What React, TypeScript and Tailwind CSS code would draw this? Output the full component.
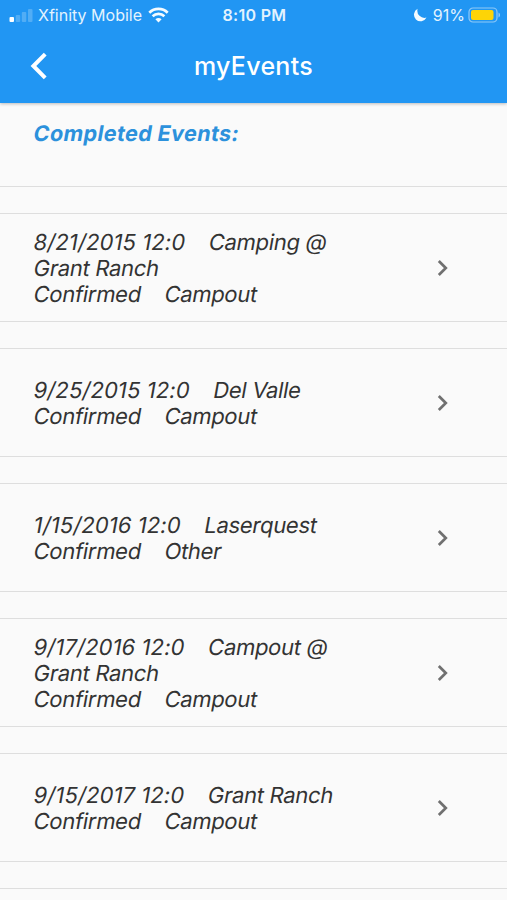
const events = [
  { date: '8/21/2015 12:0', title: ['Camping @', 'Grant Ranch'], status: 'Confirmed', type: 'Campout' },
  { date: '9/25/2015 12:0', title: ['Del Valle'], status: 'Confirmed', type: 'Campout' },
  { date: '1/15/2016 12:0', title: ['Laserquest'], status: 'Confirmed', type: 'Other' },
  { date: '9/17/2016 12:0', title: ['Campout @', 'Grant Ranch'], status: 'Confirmed', type: 'Campout' },
  { date: '9/15/2017 12:0', title: ['Grant Ranch'], status: 'Confirmed', type: 'Campout' },
]

function StatusBar() {
  return (
    <div className="grid h-[30px] grid-cols-3 items-center pl-[9px] pr-[7px] text-[16px] text-[#e3f3fe]">
      <div className="flex items-center whitespace-nowrap">
        <svg width="24" height="15" viewBox="0 0 24 15" className="shrink-0">
          <rect x="0.5" y="9" width="4.5" height="5" rx="1" fill="#fff" />
          <rect x="6.7" y="7" width="4.5" height="7" rx="1" fill="#fff" opacity="0.22" />
          <rect x="12.8" y="4" width="4.5" height="10" rx="1" fill="#fff" opacity="0.22" />
          <rect x="19" y="1" width="4.5" height="13" rx="1" fill="#fff" opacity="0.22" />
        </svg>
        <span className="ml-[5px]">Xfinity Mobile</span>
        <svg width="21" height="16" viewBox="0 0 21 16" className="ml-[6px] shrink-0" fill="none" stroke="#f4fbff" strokeWidth="2.7">
          <path d="M1.3 5.7a13.2 13.2 0 0 1 18.4 0" />
          <path d="M4.6 9.3a8.6 8.6 0 0 1 11.8 0" />
          <path d="M10.5 15.6l-3.1-3.3a4.6 4.6 0 0 1 6.2 0z" fill="#f4fbff" stroke="none" />
        </svg>
      </div>
      <p className="text-center font-semibold tracking-[0.3px]">8:10 PM</p>
      <div className="flex items-center justify-end">
        <svg width="14" height="14" viewBox="0 0 14 14" fill="#f4fbff">
          <path d="M4.6 0.8a7.2 7.2 0 0 0 8.9 8.8A6.6 6.6 0 1 1 4.6 0.8z" />
        </svg>
        <span className="ml-[6px]">91%</span>
        <svg width="32" height="16" viewBox="0 0 32 16" className="ml-[3px] shrink-0">
          <rect x="1" y="1" width="28" height="14" rx="4" fill="none" stroke="#8fc9f8" strokeWidth="1.2" />
          <rect x="3" y="3" width="22.5" height="10" rx="2" fill="#fdd406" />
          <path d="M30.5 5.5c2 .8 2 4.2 0 5z" fill="#8fc9f8" />
        </svg>
      </div>
    </div>
  )
}

export default function App() {
  return (
    <div className="flex h-[900px] w-full flex-col overflow-hidden bg-[#fafafa] font-['Inter',sans-serif]">
      <header className="relative h-[103px] shrink-0 bg-[#2196f3] shadow-[0_1px_3px_rgba(0,0,0,0.25)]">
        <StatusBar />
        <div className="grid h-[72px] grid-cols-[80px_1fr_80px] items-center">
          <a href="#" aria-label="Back" className="pl-[29px]">
            <svg width="18" height="28" viewBox="0 0 18 28" fill="none" stroke="#fff" strokeWidth="4">
              <path d="M16.2 2.2L4.4 14l11.8 11.8" />
            </svg>
          </a>
          <h1 className="pt-[2px] text-center text-[25px] font-medium tracking-[0.3px] text-white">myEvents</h1>
        </div>
      </header>

      <section className="h-[84px] shrink-0 border-b border-[#dedede] pl-[34px] pt-[17px]">
        <h2 className="-skew-x-10 text-[21.5px] font-bold leading-[26px] tracking-[0.4px] text-[#2c91dc]">
          Completed Events:
        </h2>
      </section>

      <ul className="mt-[26px] flex shrink-0 flex-col gap-[26px]">
        {events.map((event) => (
          <li
            key={event.date}
            className="flex h-[109px] items-center justify-between border-y border-[#dedede] pl-[34px] pr-[58px]"
          >
            <div className="w-[320px] whitespace-pre text-[22px] leading-[26px] tracking-[-0.3px] text-[#333]">
              <p className="-skew-x-10">
                <span className="tracking-[0.1px]">{event.date}</span>{'    '}{event.title[0]}
              </p>
              {event.title[1] && <p className="-skew-x-10">{event.title[1]}</p>}
              <p className="-skew-x-10">{event.status}{'    '}{event.type}</p>
            </div>
            <svg width="13" height="18" viewBox="0 0 13 18" fill="none" stroke="#707070" strokeWidth="2.7">
              <path d="M2.8 2l7 7-7 7" />
            </svg>
          </li>
        ))}
        <li className="h-[12px] border-t border-[#dedede]"></li>
      </ul>
    </div>
  )
}
